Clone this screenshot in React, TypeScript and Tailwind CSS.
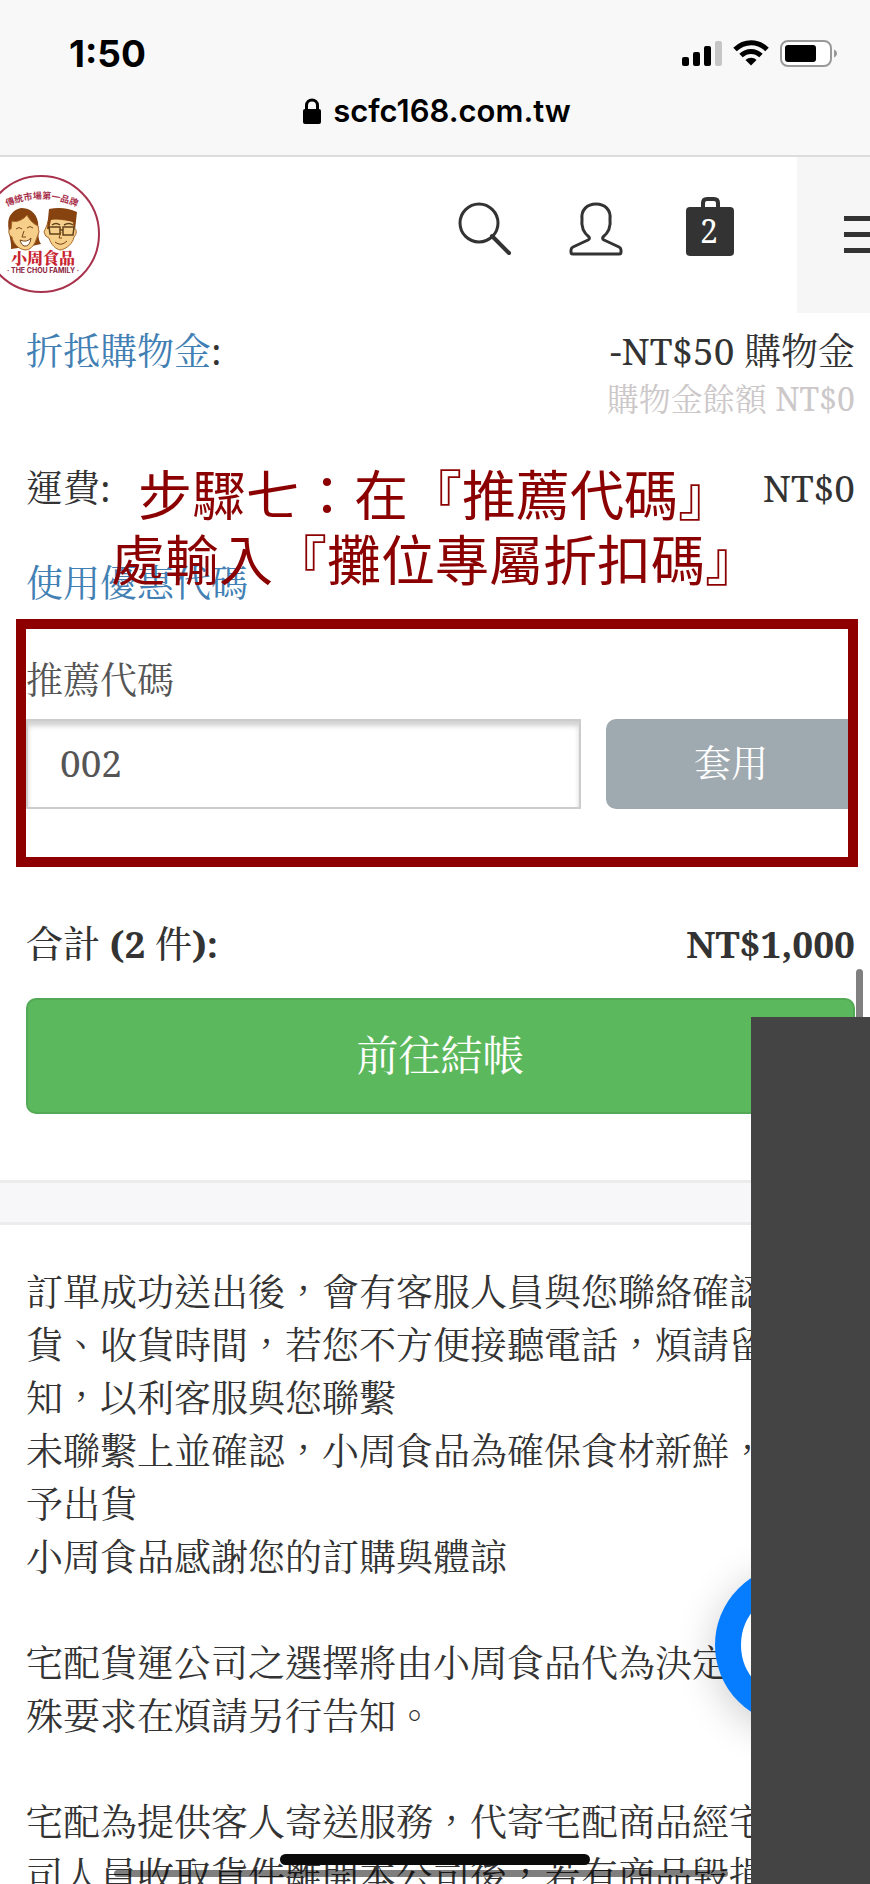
import { useState } from "react";

const NOTICE_LINES = [
  "訂單成功送出後，會有客服人員與您聯絡確認",
  "貨、收貨時間，若您不方便接聽電話，煩請留",
  "知，以利客服與您聯繫",
  "未聯繫上並確認，小周食品為確保食材新鮮，",
  "予出貨",
  "小周食品感謝您的訂購與體諒",
  "",
  "宅配貨運公司之選擇將由小周食品代為決定",
  "殊要求在煩請另行告知。",
  "",
  "宅配為提供客人寄送服務，代寄宅配商品經宅",
  "司人員收取貨件離開本公司後，若有商品毀損",
];

function StatusIcons() {
  return (
    <svg width="156" height="28" viewBox="0 0 156 28" aria-hidden="true">
      <rect x="0" y="17" width="7" height="9" rx="2" />
      <rect x="11" y="12" width="7" height="14" rx="2" />
      <rect x="22" y="6" width="7" height="20" rx="2" />
      <rect x="33" y="1" width="7" height="25" rx="2" fill="#c6c6c6" />
      <g fill="none" stroke="#000" strokeWidth="5">
        <path d="M53 9.500C62.500 0.500 76 0.500 85 9.500" />
        <path d="M59 15.500C65 10 73 10 79 15.500" />
      </g>
      <path d="M63.500 20C67 17 71.500 17 74.500 20L69 25.500Z" />
      <rect
        x="99"
        y="1"
        width="50"
        height="25"
        rx="7"
        fill="#fff"
        stroke="#999"
        strokeWidth="2"
      />
      <rect x="103" y="5" width="31" height="17" rx="3" />
      <path d="M152 9.500C156 11 156 16 152 17.500Z" fill="#999" />
    </svg>
  );
}

function LockIcon() {
  return (
    <svg width="18" height="26" viewBox="0 0 18 26" aria-hidden="true">
      <rect x="0" y="11" width="18" height="15" rx="2" />
      <path
        d="M3.500 12V7.500C3.500 0 14.500 0 14.500 7.500V12"
        fill="none"
        stroke="#000"
        strokeWidth="3"
      />
    </svg>
  );
}

function ShopLogo() {
  return (
    <svg width="100" height="118" viewBox="0 0 100 118" aria-label="小周食品">
      <defs>
        <path id="logo-arc" d="M2 34Q41 14 82 34" />
      </defs>
      <circle cx="41" cy="59" r="58" fill="#fff" stroke="#a8324c" strokeWidth="2" />
      <text
        fill="#a8324c"
        className="font-['Noto_Sans_CJK_TC',sans-serif] text-[9px] font-bold"
      >
        <textPath href="#logo-arc" startOffset="50%" textAnchor="middle">
          傳統市場第一品牌
        </textPath>
      </text>
      {/* left face */}
      <path
        d="M11 74C12 66 6 52 9 43C12 36 17 34 21 33C29 33 36 37 38 47C39 55 37 63 41 69L32 71Z"
        fill="#86420f"
      />
      <path
        d="M12 46C17 48 24 44 27 40C30 46 34 49 38 51L39 57L36 65C34 71 30 75 25 75C18 74 13 68 12 62C8 60 8 54 11 54Z"
        fill="#f6d08b"
        stroke="#a8682c"
      />
      <path
        d="M16 54Q19 51 22 54M27 53Q30 50 33 53M24 56L22 62H26"
        fill="none"
        stroke="#7a4518"
      />
      <path d="M20 65Q27 68 31 63Q30 72 24 71Q21 70 20 65Z" fill="#fff" stroke="#7a4518" />
      {/* right face */}
      <path
        d="M47 50L44 57Q45 62 49 63C51 70 56 74 60 75C67 74 73 68 74 62C77 59 77 54 74 53L73 46L49 43Z"
        fill="#f6d08b"
        stroke="#a8682c"
      />
      <path d="M47 54L49 34Q64 31 77 37L75 55L73 47Q61 43 51 45L49 54Z" fill="#86420f" />
      <path
        d="M49 52H60V59H50ZM63 52H74L73 60H63ZM60 55H63M52 50Q56 47 60 50M64 50Q69 47 73 50"
        fill="none"
        stroke="#61401a"
        strokeWidth="1.500"
      />
      <path d="M61 57L59 63H62M55 67Q61 72 67 66" fill="none" stroke="#7a4518" />
      <text
        x="43"
        y="89"
        textAnchor="middle"
        fill="#c8242f"
        className="font-['Noto_Serif_CJK_TC','Noto_Sans_CJK_TC',serif] text-[16px] font-black"
      >
        小周食品
      </text>
      <text
        x="43"
        y="98"
        textAnchor="middle"
        fill="#8c2440"
        className="font-['Inter',sans-serif] text-[7px] font-bold"
      >
        · THE CHOU FAMILY ·
      </text>
    </svg>
  );
}

function SearchIcon() {
  return (
    <svg width="54" height="54" viewBox="0 0 54 54" fill="none" stroke="#333" aria-hidden="true">
      <circle cx="21" cy="21" r="19" strokeWidth="3" />
      <path d="M34 34L51 51" strokeWidth="4" strokeLinecap="round" />
    </svg>
  );
}

function UserIcon() {
  return (
    <svg width="54" height="54" viewBox="0 0 54 54" fill="none" stroke="#333" aria-hidden="true">
      <path
        d="M27 2C18 2 12 8 13 17C12 25 15 31 20 35Q21 37 19 38L4 45Q2 46 2 48V50Q2 52 4 52H50Q52 52 52 50V48Q52 46 50 45L35 38Q33 37 34 35C39 31 42 25 41 17C42 8 36 2 27 2Z"
        strokeWidth="3"
        strokeLinejoin="round"
      />
    </svg>
  );
}

function BagIcon({ count }: { count: number }) {
  return (
    <svg width="48" height="60" viewBox="0 0 48 60" aria-hidden="true">
      <rect x="0" y="10" width="48" height="49" rx="4" fill="#333" />
      <path d="M17 11V6Q17 2 21 2H28Q32 2 32 6V11" fill="none" stroke="#333" strokeWidth="4" />
      <text
        x="23"
        y="46"
        textAnchor="middle"
        fill="#fff"
        className="font-['Noto_Serif','Liberation_Serif',serif] text-[32px]"
      >
        {count}
      </text>
    </svg>
  );
}

export default function App() {
  const [code, setCode] = useState("002");

  return (
    <div className="relative h-screen overflow-hidden bg-white font-['Noto_Serif','Liberation_Serif','Noto_Serif_CJK_TC','Noto_Sans_CJK_TC',serif] text-[37px] leading-[53px] font-normal text-[#333]">
      <div className="h-[157px] border-b-2 border-[#dcdede] bg-[#f9f8f9] font-['Inter',sans-serif] text-black">
        <div className="flex items-center justify-between pt-8 pr-8 pl-[69px]">
          <span className="text-[37px] leading-[44px] font-bold">1:50</span>
          <StatusIcons />
        </div>
        <div className="mt-[13px] flex items-center justify-center gap-3 pl-1 text-[31px] leading-[44px] font-semibold">
          <LockIcon />
          <span>scfc168.com.tw</span>
        </div>
      </div>

      <header className="flex h-[156px] items-stretch justify-between">
        <a href="#home" className="pt-[18px]">
          <ShopLogo />
        </a>
        <nav className="flex">
          <div className="flex items-start pt-10">
            <button type="button" aria-label="搜尋" className="mt-[5px] mr-[57px]">
              <SearchIcon />
            </button>
            <button type="button" aria-label="會員" className="mt-[5px] mr-[63px]">
              <UserIcon />
            </button>
            <button type="button" aria-label="購物車" className="mr-[63px]">
              <BagIcon count={2} />
            </button>
          </div>
          <button
            type="button"
            aria-label="選單"
            className="flex w-[73px] flex-col items-end gap-[11px] bg-[#f6f6f6] pt-[59px]"
          >
            <span className="h-[5px] w-[26px] bg-[#333]" />
            <span className="h-[5px] w-[26px] bg-[#333]" />
            <span className="h-[5px] w-[26px] bg-[#333]" />
          </button>
        </nav>
      </header>

      <main>
        <div className="relative pt-[11px] pr-[15px] pl-[26px]">
          <div className="flex justify-between">
            <span>
              <a href="#credits" className="text-[#4280b4]">
                折抵購物金
              </a>
              :
            </span>
            <span>-NT$50 購物金</span>
          </div>
          <p className="text-right text-[32px] leading-[44px] text-[#ccc8c9]">
            購物金餘額 NT$0
          </p>
          <div className="mt-10 flex justify-between">
            <span>運費:</span>
            <span>NT$0</span>
          </div>
          <a href="#coupon" className="mt-[42px] block text-[#4280b4]">
            使用優惠代碼
          </a>
          <p className="absolute inset-x-0 bottom-[19px] text-center font-['Noto_Sans_CJK_TC',sans-serif] text-[54px] leading-[65px] font-normal text-[#8b0000]">
            步驟七：在『推薦代碼』
            <br />
            處輸入『攤位專屬折扣碼』
          </p>
        </div>

        <form
          onSubmit={(e) => e.preventDefault()}
          className="mt-[10px] mr-3 ml-4 border-10 border-[#8e0000] pt-6 pb-12"
        >
          <label htmlFor="referral" className="block text-[#555]">
            推薦代碼
          </label>
          <div className="mt-[13px] flex gap-[25px]">
            <input
              id="referral"
              type="text"
              value={code}
              onChange={(e) => setCode(e.target.value)}
              className="h-[90px] min-w-0 flex-1 border-2 border-[#ccc] px-8 pb-1 text-[#555] shadow-[inset_0_5px_5px_rgba(0,0,0,0.18)] outline-none"
            />
            <button
              type="submit"
              className="h-[90px] w-[242px] rounded-l-[10px] bg-[#9fa9b0] pb-1 pl-2 text-white"
            >
              套用
            </button>
          </div>
        </form>

        <div className="mt-[50px] flex justify-between pr-[15px] pl-[26px] font-bold">
          <span>
            <span className="font-medium">合計</span> (2{" "}
            <span className="font-medium">件</span>):
          </span>
          <span>NT$1,000</span>
        </div>
        <div className="mt-[28px] pr-[15px] pl-[26px]">
          <button
            type="button"
            className="h-[116px] w-full rounded-[10px] border-2 border-[#54a954] bg-[#5cb85c] pb-1 text-[42px] text-white"
          >
            前往結帳
          </button>
        </div>

        <div className="mt-[66px] h-[45px] border-y-3 border-[#ececec] bg-[#f7f7fa]" />

        <div className="pt-10 pl-[26px] whitespace-nowrap">
          {NOTICE_LINES.map((line, i) => (
            <p key={i} className="h-[53px]">
              {line}
            </p>
          ))}
        </div>
      </main>

      {/* floating chat bubble */}
      <button
        type="button"
        aria-label="聊天"
        className="absolute top-[1565px] -right-[5px] size-[160px] rounded-full border-26 border-[#067dff] bg-white shadow-[0_8px_40px_rgba(0,0,0,0.2)]"
      />
      {/* page scrollbars */}
      <div className="absolute top-[969px] right-[7px] h-[120px] w-[7px] rounded-full bg-[#808080]" />
      <div className="absolute bottom-[7px] left-[114px] h-[7px] w-[614px] rounded-full bg-black/50" />
      <div className="absolute top-[1017px] right-0 bottom-0 w-[119px] bg-[#444]" />
      <div className="absolute inset-x-0 bottom-[19px] mx-auto h-[11px] w-[310px] rounded-full bg-[#0a0a0a]" />
    </div>
  );
}
